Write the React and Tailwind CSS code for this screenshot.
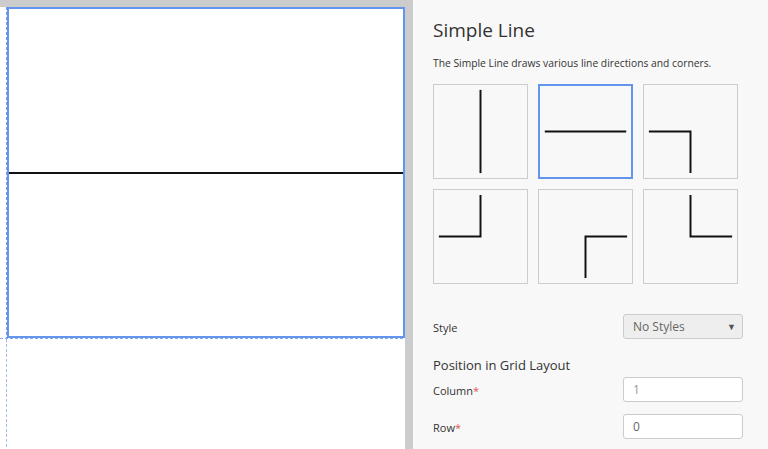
import React from "react";

const font = { fontFamily: '"Open Sans", "Noto Sans", sans-serif' };

// each tile is 95x95, lines inset by 5px
const shapes = [
  { id: "vertical", d: "M47.5 5 V90" },
  { id: "horizontal", d: "M5 47.5 H90" },
  { id: "top-right", d: "M5 47.5 H47.5 V90" },
  { id: "bottom-right", d: "M5 47.5 H47.5 V5" },
  { id: "bottom-left", d: "M90 47.5 H47.5 V90" },
  { id: "top-left", d: "M47.5 5 V47.5 H90" },
];

function Tile({ shape, selected }) {
  return (
    <button
      className={`w-[95px] h-[95px] bg-[#f8f8f8] p-0 ${
        selected ? "border-2 border-[#6495ed]" : "border border-[#cccccc]"
      }`}
    >
      <svg viewBox="0 0 95 95" className="w-full h-full block">
        <path d={shape.d} fill="none" stroke="#111" strokeWidth="2" />
      </svg>
    </button>
  );
}

function Field({ label, required, children }) {
  return (
    <div className="flex items-center justify-between pr-[25px]">
      <span className="pt-[3px] text-[11px] text-[#333]">
        {label}
        {required && <span className="text-[#e05555]">*</span>}
      </span>
      {children}
    </div>
  );
}

export default function App() {
  return (
    <div className="flex w-[768px] h-[449px] overflow-hidden" style={font}>
      {/* canvas */}
      <div className="w-[413px] h-full bg-[#cccccc] pt-[7px] pr-[8px]">
        <div className="relative h-full bg-white">
          <div className="absolute left-[6px] top-0 w-px h-[332px] bg-[linear-gradient(to_bottom,#6f97ee_3px,transparent_3px)] bg-[length:1px_5px]" />
          <div className="absolute left-[6px] top-[332px] w-px h-[200px] bg-[linear-gradient(to_bottom,#a3bdf4_3px,transparent_3px)] bg-[length:1px_5px]" />
          <div className="absolute left-0 top-[331px] h-px w-[405px] bg-[linear-gradient(to_right,#86a8f2_3px,transparent_3px)] bg-[length:5px_1px]" />
          <div className="relative ml-[7px] w-[398px] h-[331px] border-2 border-[#6495ed] flex items-center">
            <div className="w-full h-[2px] bg-[#111]" />
          </div>
        </div>
      </div>

      {/* properties */}
      <div className="flex-1 h-full bg-[#f8f8f8] pl-[20px] pt-[16px]">
        <h1 className="text-[19px] leading-[28px] text-[#333] font-normal">Simple Line</h1>
        <p className="mt-[12px] text-[10.3px] leading-[14px] text-[#333]">
          The Simple Line draws various line directions and corners.
        </p>
        <div className="mt-[14px] grid grid-cols-[95px_95px_95px] gap-[10px]">
          {shapes.map((s) => (
            <Tile key={s.id} shape={s} selected={s.id === "horizontal"} />
          ))}
        </div>

        <div className="mt-[30px]">
          <Field label="Style">
            <div className="w-[120px] h-[25px] bg-[#eeeeee] border border-[#cccccc] rounded-[3px] flex items-center justify-between pl-[9px] pr-[6px]">
              <span className="text-[12px] text-[#666]">No Styles</span>
              <span className="text-[9px] text-[#555]">▼</span>
            </div>
          </Field>
        </div>

        <h2 className="mt-[17px] text-[13px] leading-[18px] text-[#333]">Position in Grid Layout</h2>

        <div className="mt-[3px] flex flex-col gap-[12px]">
          <Field label="Column" required>
            <input
              defaultValue=""
              placeholder="1"
              className="w-[120px] h-[25px] bg-white border border-[#cccccc] rounded-[3px] px-[9px] text-[12px] text-[#666] placeholder:text-[#999] outline-none"
            />
          </Field>
          <Field label="Row" required>
            <input
              defaultValue="0"
              className="w-[120px] h-[25px] bg-white border border-[#cccccc] rounded-[3px] px-[9px] text-[12px] text-[#666] outline-none"
            />
          </Field>
        </div>
      </div>
    </div>
  );
}
